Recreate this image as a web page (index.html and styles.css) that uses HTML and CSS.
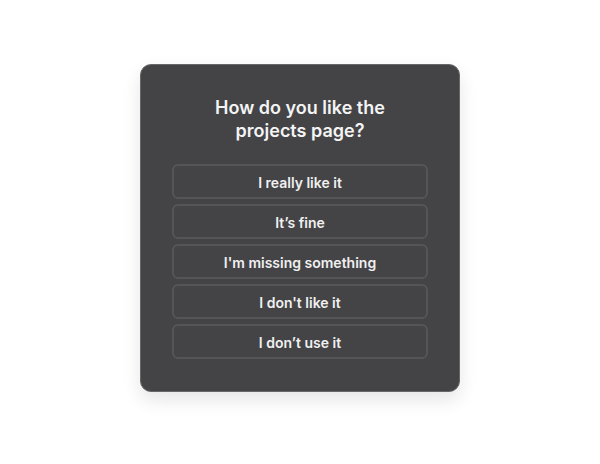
FILE: index.html
```html
<!DOCTYPE html>
<html>
<head>
<meta charset="utf-8">
<link rel="stylesheet" href="styles.css">
</head>
<body>
<div class="card">
  <h1 class="title">How do you like the<br>projects page?</h1>
  <div class="options">
    <button class="option">I really like it</button>
    <button class="option">It’s fine</button>
    <button class="option">I'm missing something</button>
    <button class="option">I don't like it</button>
    <button class="option">I don’t use it</button>
  </div>
</div>
</body>
</html>
```
FILE: styles.css
```css
html, body {
  margin: 0;
  padding: 0;
  background: #ffffff;
}
body {
  width: 600px;
  height: 464px;
  font-family: Inter, "Noto Sans", sans-serif;
  display: flex;
  justify-content: center;
  align-items: flex-start;
  padding-top: 64px;
  box-sizing: border-box;
}
.card {
  width: 320px;
  box-sizing: border-box;
  background: #444446;
  border: 1px solid #68686a;
  border-radius: 11px;
  padding: 31px 31px 32px;
  box-shadow: 0 8px 18px rgba(0, 0, 0, 0.10);
  display: flex;
  flex-direction: column;
  gap: 22px;
}
.title {
  margin: 0;
  color: #f4f4f5;
  font-size: 18px;
  line-height: 23px;
  font-weight: 600;
  text-align: center;
}
.options {
  display: flex;
  flex-direction: column;
  gap: 5px;
}
.option {
  height: 35px;
  box-sizing: border-box;
  background: transparent;
  border: 2px solid #555557;
  border-radius: 6px;
  color: #f0f0f1;
  font-family: Inter, "Noto Sans", sans-serif;
  font-size: 14px;
  font-weight: 600;
  padding: 1px 0 0;
}
```
